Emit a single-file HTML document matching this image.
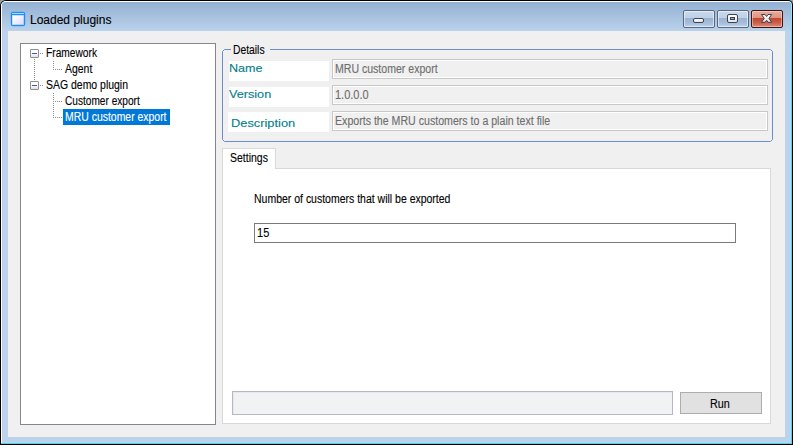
<!DOCTYPE html>
<html><head><meta charset="utf-8">
<style>
*{margin:0;padding:0;box-sizing:border-box}
html,body{width:793px;height:445px;overflow:hidden;background:#9c9c9c}
body{position:relative;font-family:"Liberation Sans",sans-serif;font-size:11px;color:#000}
.a{position:absolute}
.t{position:absolute;white-space:nowrap;line-height:12px;transform-origin:0 0;-webkit-text-stroke:0.12px currentColor}
.s{font-size:12px}
</style></head><body>
<!-- outer frame -->
<div class="a" style="left:0;top:0;width:793px;height:445px;background:#000;border-radius:6px 5px 0 0"></div>
<div class="a" style="left:1px;top:1px;width:791px;height:443px;background:linear-gradient(#a8e4f6,#40d9f6 60px);border-radius:5px 4px 0 0"></div>
<div class="a" style="left:1px;top:1px;width:790px;height:442px;background:#fff;border-radius:5px 4px 0 0"></div>
<div class="a" style="left:2px;top:2px;width:789px;height:441px;background:#c6d0e8;border-radius:4px 3px 0 0"></div>
<div class="a" style="left:2px;top:2px;width:788px;height:440px;background:#bdd3eb;border-radius:4px 3px 0 0"></div>
<div class="a" style="left:2px;top:2px;width:789px;height:29px;background:linear-gradient(#94b1d2,#bad2eb);border-radius:4px 3px 0 0"></div>
<!-- client -->
<div class="a" style="left:8px;top:31px;width:777px;height:406px;background:#f0f0f0"></div>

<!-- title icon -->
<div class="a" style="left:11px;top:12px;width:14px;height:14px;background:#1a8cff;border-radius:2px;box-shadow:0 0 0.5px 0.3px rgba(26,140,255,.6)"></div>
<div class="a" style="left:12px;top:13px;width:12px;height:1px;background:#a6dcff"></div>
<div class="a" style="left:12px;top:15px;width:12px;height:10px;background:linear-gradient(135deg,#ffffff 15%,#dcd8fb 100%);box-shadow:inset 0 0 0 0.5px rgba(26,140,255,.45)"></div>
<div class="t" style="left:30px;top:14px;font-size:12px;color:#000">Loaded plugins</div>

<!-- caption buttons -->
<div class="a" style="left:683px;top:10px;width:32px;height:18px;border:1px solid #56677f;border-radius:2px;background:linear-gradient(#c9d9ec 0,#bfd0e6 7px,#99b2cf 7px,#a6bedb 12px,#bcd1ea 100%);box-shadow:inset 0 0 0 1px rgba(255,255,255,.55)"></div>
<div class="a" style="left:693px;top:18px;width:11px;height:5px;border:1px solid #3a4456;border-radius:2px;background:linear-gradient(#fff,#e4e4e4)"></div>
<div class="a" style="left:717px;top:10px;width:32px;height:18px;border:1px solid #56677f;border-radius:2px;background:linear-gradient(#c9d9ec 0,#bfd0e6 7px,#99b2cf 7px,#a6bedb 12px,#bcd1ea 100%);box-shadow:inset 0 0 0 1px rgba(255,255,255,.55)"></div>
<div class="a" style="left:727px;top:14px;width:11px;height:9px;border:1px solid #3a4456;border-radius:2px;background:linear-gradient(#fff,#e4e4e4)"></div>
<div class="a" style="left:730px;top:17px;width:5px;height:3px;border:1px solid #3a4456;background:#8eaacb"></div>
<div class="a" style="left:751px;top:10px;width:32px;height:18px;border:1px solid #431212;border-radius:2px;background:linear-gradient(#eaaa9c 0,#e09482 7px,#c2462e 7px,#c85a44 11px,#d98a78 100%);box-shadow:inset 0 0 0 1px rgba(255,225,215,.5)"></div>
<svg class="a" style="left:760px;top:13px" width="14" height="11" viewBox="0 0 14 11">
<defs><linearGradient id="xg" x1="0" y1="0" x2="0" y2="1"><stop offset="0" stop-color="#ffffff"/><stop offset="1" stop-color="#dcdcdc"/></linearGradient></defs>
<path d="M1.5,1.5 L5.1,1.5 L6.6,3.5 L8.1,1.5 L11.7,1.5 L9,5.4 L11.7,9.3 L8.1,9.3 L6.6,7.3 L5.1,9.3 L1.5,9.3 L4.2,5.4 Z" fill="url(#xg)" stroke="#3c404c" stroke-width="1" stroke-linejoin="round"/>
</svg>

<!-- tree -->
<div class="a" style="left:20px;top:43px;width:196px;height:382px;border:1px solid #828790;background:#fff"></div>
<svg class="a" style="left:0;top:0" width="200" height="130">
<g fill="#8c8c8c">
<rect x="40" y="53" width="1" height="1"/><rect x="42" y="53" width="1" height="1"/>
<rect x="40" y="85" width="1" height="1"/><rect x="42" y="85" width="1" height="1"/>
<rect x="34" y="59" width="1" height="1"/><rect x="34" y="61" width="1" height="1"/><rect x="34" y="63" width="1" height="1"/><rect x="34" y="65" width="1" height="1"/><rect x="34" y="67" width="1" height="1"/><rect x="34" y="69" width="1" height="1"/><rect x="34" y="71" width="1" height="1"/><rect x="34" y="73" width="1" height="1"/><rect x="34" y="75" width="1" height="1"/><rect x="34" y="77" width="1" height="1"/><rect x="34" y="79" width="1" height="1"/>
<rect x="53" y="61" width="1" height="1"/><rect x="53" y="63" width="1" height="1"/><rect x="53" y="65" width="1" height="1"/><rect x="53" y="67" width="1" height="1"/><rect x="53" y="69" width="1" height="1"/>
<rect x="55" y="69" width="1" height="1"/><rect x="57" y="69" width="1" height="1"/><rect x="59" y="69" width="1" height="1"/><rect x="61" y="69" width="1" height="1"/>
<rect x="53" y="93" width="1" height="1"/><rect x="53" y="95" width="1" height="1"/><rect x="53" y="97" width="1" height="1"/><rect x="53" y="99" width="1" height="1"/><rect x="53" y="101" width="1" height="1"/><rect x="53" y="103" width="1" height="1"/><rect x="53" y="105" width="1" height="1"/><rect x="53" y="107" width="1" height="1"/><rect x="53" y="109" width="1" height="1"/><rect x="53" y="111" width="1" height="1"/><rect x="53" y="113" width="1" height="1"/><rect x="53" y="115" width="1" height="1"/><rect x="53" y="117" width="1" height="1"/>
<rect x="55" y="101" width="1" height="1"/><rect x="57" y="101" width="1" height="1"/><rect x="59" y="101" width="1" height="1"/><rect x="61" y="101" width="1" height="1"/>
<rect x="55" y="117" width="1" height="1"/><rect x="57" y="117" width="1" height="1"/><rect x="59" y="117" width="1" height="1"/><rect x="61" y="117" width="1" height="1"/>
</g>
</svg>
<div class="a" style="left:30px;top:49px;width:9px;height:9px;border:1px solid #8f8f8f;border-radius:1px;background:linear-gradient(#fff 40%,#e2e2e2)"></div>
<div class="a" style="left:32px;top:53px;width:5px;height:1px;background:#3b5ba8"></div>
<div class="a" style="left:30px;top:81px;width:9px;height:9px;border:1px solid #8f8f8f;border-radius:1px;background:linear-gradient(#fff 40%,#e2e2e2)"></div>
<div class="a" style="left:32px;top:85px;width:5px;height:1px;background:#3b5ba8"></div>
<div class="t s" style="left:46px;top:47px;transform:scaleX(.85)">Framework</div>
<div class="t s" style="left:65px;top:63px;transform:scaleX(.871)">Agent</div>
<div class="t s" style="left:46px;top:79px;transform:scaleX(.872)">SAG demo plugin</div>
<div class="t s" style="left:65px;top:95px;transform:scaleX(.843)">Customer export</div>
<div class="a" style="left:63px;top:109px;width:107px;height:16px;background:#0078d7"></div>
<div class="t s" style="left:65px;top:111px;color:#fff;transform:scaleX(.87)">MRU customer export</div>

<!-- details group -->
<svg class="a" style="left:0;top:0" width="793" height="150"><path d="M224.5,49.5 L770.5,49.5 L772.5,51.5 L772.5,139.5 L770.5,141.5 L224.5,141.5 L222.5,139.5 L222.5,51.5 Z" fill="none" stroke="#6b8dd0" stroke-width="1"/></svg>
<div class="a" style="left:231px;top:45px;width:39px;height:10px;background:#f0f0f0"></div>
<div class="t s" style="left:233px;top:44px;transform:scaleX(.861)">Details</div>

<div class="a" style="left:229px;top:61px;width:100px;height:20px;background:#fff"></div>
<div class="a" style="left:229px;top:87px;width:100px;height:20px;background:#fff"></div>
<div class="a" style="left:228px;top:112px;width:101px;height:20px;background:#fff"></div>
<div class="t" style="left:229px;top:62px;color:#05808c;transform:scaleX(1.143)">Name</div>
<div class="t" style="left:229px;top:88px;color:#05808c;transform:scaleX(1.15)">Version</div>
<div class="t" style="left:231px;top:117px;color:#05808c;transform:scaleX(1.167)">Description</div>

<div class="a" style="left:332px;top:59px;width:436px;height:20px;border:1px solid #c8c8c8;box-shadow:inset 0 0 0 1px #fff;background:#f0f0f0"></div>
<div class="a" style="left:332px;top:85px;width:436px;height:20px;border:1px solid #c8c8c8;box-shadow:inset 0 0 0 1px #fff;background:#f0f0f0"></div>
<div class="a" style="left:332px;top:111px;width:436px;height:20px;border:1px solid #c8c8c8;box-shadow:inset 0 0 0 1px #fff;background:#f0f0f0"></div>
<div class="t s" style="left:335px;top:63px;color:#6d6d6d;transform:scaleX(.879)">MRU customer export</div>
<div class="t s" style="left:335px;top:89px;color:#6d6d6d;transform:scaleX(.914)">1.0.0.0</div>
<div class="t s" style="left:335px;top:115px;color:#6d6d6d;transform:scaleX(.884)">Exports the MRU customers to a plain text file</div>

<!-- tab -->
<div class="a" style="left:222px;top:168px;width:549px;height:256px;border:1px solid #d9d9d9;background:#fff"></div>
<div class="a" style="left:222px;top:148px;width:54px;height:21px;border:1px solid #d9d9d9;border-bottom:0;background:#fff"></div>
<div class="t s" style="left:230px;top:152px;transform:scaleX(.875)">Settings</div>

<div class="t s" style="left:254px;top:193px;transform:scaleX(.874)">Number of customers that will be exported</div>
<div class="a" style="left:254px;top:223px;width:482px;height:20px;border:1px solid #7a7a7a;background:#fff"></div>
<div class="t s" style="left:257px;top:227px;transform:scaleX(.92)">15</div>

<div class="a" style="left:232px;top:391px;width:441px;height:24px;border:1px solid #b7b7c4;background:#f1f2f4;box-shadow:inset 1px 1px 0 #e7e8eb"></div>
<div class="a" style="left:680px;top:392px;width:82px;height:22px;border:1px solid #adadad;background:#e1e1e1"></div>
<div class="t s" style="left:710px;top:398px;transform:scaleX(.9)">Run</div>
</body></html>
